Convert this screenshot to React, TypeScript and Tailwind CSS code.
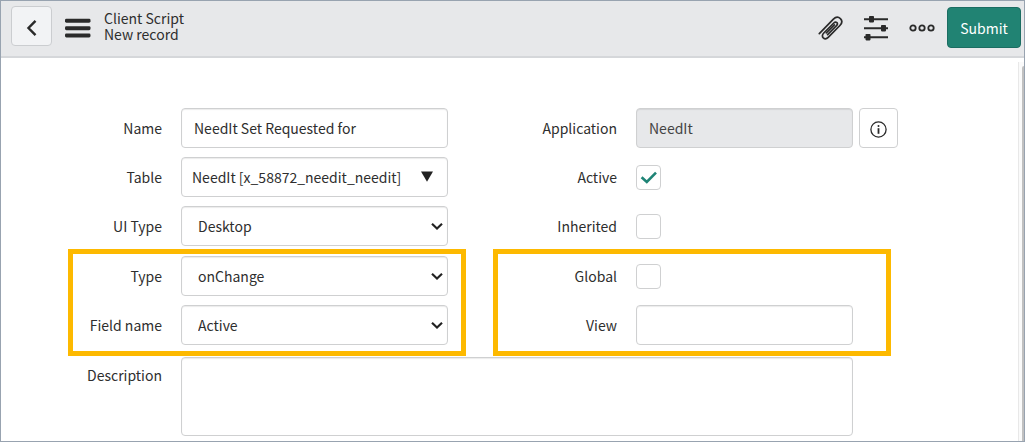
import type { ReactNode } from "react";

const fieldBox =
  "h-10 w-full min-w-0 rounded-[4px] border border-[#cfd0d1] bg-white text-[14px] leading-5 text-[#2e2e2e] shadow-[inset_0_1px_1px_rgba(0,0,0,0.08)]";

function Row({ id, label, wide, children }: { id: string; label: string; wide?: boolean; children: ReactNode }) {
  return (
    <div
      className={
        wide
          ? "grid grid-cols-[169px_minmax(0,1fr)] items-center gap-x-[19px]"
          : "grid grid-cols-[161px_minmax(0,1fr)] items-center gap-x-[19px]"
      }
    >
      <label htmlFor={id} className="text-right">
        {label}
      </label>
      {children}
    </div>
  );
}

function SelectBox({ id, options }: { id: string; options: string[] }) {
  return (
    <div className="relative">
      <select id={id} className={`${fieldBox} appearance-none pr-8 pl-4`}>
        {options.map((o) => (
          <option key={o}>{o}</option>
        ))}
      </select>
      <svg
        className="pointer-events-none absolute top-4 right-[5px] h-2 w-3"
        viewBox="0 0 12 8"
        fill="none"
        stroke="#222"
        strokeWidth="2.2"
        aria-hidden="true"
      >
        <path d="M1 1.800 6 6.500l5-4.700" />
      </svg>
    </div>
  );
}

function CheckBox({ id, checked }: { id: string; checked?: boolean }) {
  return (
    <div className="flex h-10 items-center">
      <span className="relative flex">
        <input
          id={id}
          type="checkbox"
          defaultChecked={checked}
          className="peer size-[25px] appearance-none rounded-[4px] border border-[#cfd0d1] bg-white"
        />
        <svg
          className="pointer-events-none absolute inset-0 hidden size-[25px] peer-checked:block"
          viewBox="0 0 25 25"
          fill="none"
          stroke="#1f8476"
          strokeWidth="2.6"
          aria-hidden="true"
        >
          <path d="M5.600 12.200 10.800 17 20 7.600" />
        </svg>
      </span>
    </div>
  );
}

function Highlight({ side }: { side: "left" | "right" }) {
  return (
    <div
      aria-hidden="true"
      className={
        side === "left"
          ? "pointer-events-none absolute -top-[7px] -right-[18px] -bottom-[11px] left-[67px] border-[5px] border-[#fdb900]"
          : "pointer-events-none absolute -top-[7px] right-[7px] -bottom-[11px] left-[45px] border-[5px] border-[#fdb900]"
      }
    />
  );
}

export default function App() {
  return (
    <div className="flex min-h-screen flex-col border border-[#98a3b0] bg-white font-['Noto_Sans_CJK_SC','Noto_Sans',sans-serif] text-[14px] leading-5 text-[#2e2e2e]">
      <header className="flex items-start justify-between border-b-2 border-[#d5d7da] bg-[#e7e8ea] pt-[5px] pr-[3px] pb-[8px] pl-[10px]">
        <div className="flex h-10 items-center">
          <button
            type="button"
            aria-label="Back"
            className="flex h-10 w-[41px] items-center justify-center rounded-[4px] border border-[#cbcdd0] bg-[#f2f3f5]"
          >
            <svg className="mt-[3px] h-4 w-3" viewBox="0 0 12 16" fill="none" stroke="#2a2a2a" strokeWidth="2.4" aria-hidden="true">
              <path d="M9.500 .9 2.500 8l7 7.100" />
            </svg>
          </button>
          <button type="button" aria-label="Menu" className="mt-[3px] ml-[13px]">
            <svg className="h-5 w-[26px]" viewBox="0 0 26 20" fill="#2a2a2a" aria-hidden="true">
              <rect x="0" y="0.7" width="25.5" height="4" rx="1.4" />
              <rect x="0" y="8.2" width="25.5" height="4" rx="1.4" />
              <rect x="0" y="15.5" width="25.5" height="4" rx="1.4" />
            </svg>
          </button>
          <h1 className="ml-[13px] leading-4">
            <span className="block">Client Script</span>
            <span className="block">New record</span>
          </h1>
        </div>
        <div className="flex items-center pt-px">
          <button type="button" aria-label="Attachments">
            <svg
              className="h-6 w-[26px]"
              viewBox="0 0 26 24"
              fill="none"
              stroke="#2a2a2a"
              strokeWidth="1.7"
              strokeLinecap="round"
              aria-hidden="true"
            >
              <path d="M1.3 17.6 15.4 3.2c2.4-2.4 5-2.4 7-.6 2 2 1.800 4.500-.5 6.900L10.200 21.400c-1.700 1.700-3.600 1.700-4.900.5-1.300-1.300-1.200-3.200.5-4.900L15.800 7c1.100-1.100 2.300-1.100 3.100-.4.800.8.700 2-.4 3.100l-8.900 8.900" />
              <path d="m8.300 16.800 8-8" />
            </svg>
          </button>
          <button type="button" aria-label="Personalize form" className="ml-5">
            <svg className="h-[26px] w-6" viewBox="0 0 24 26" fill="#2a2a2a" aria-hidden="true">
              <path d="M0 3.200h24v2H0zM0 12.200h24v2H0zM0 21.200h24v2H0z" />
              <rect x="5" y="1" width="5" height="6.400" rx=".8" />
              <rect x="17" y="10" width="5" height="6.400" rx=".8" />
              <rect x="1.500" y="19" width="5" height="6.400" rx=".8" />
            </svg>
          </button>
          <button type="button" aria-label="More options" className="ml-[21px]">
            <svg className="h-2 w-[26px]" viewBox="0 0 26 8" fill="none" stroke="#2a2a2a" strokeWidth="1.800" aria-hidden="true">
              <circle cx="4" cy="4" r="2.700" />
              <circle cx="13" cy="4" r="2.700" />
              <circle cx="22" cy="4" r="2.700" />
            </svg>
          </button>
          <button
            type="submit"
            form="client-script"
            className="ml-3 h-[41px] w-[74px] rounded-[4px] border border-[#1b6d62] bg-[#218373] text-white"
          >
            Submit
          </button>
        </div>
      </header>

      <div className="flex grow">
        <form
          id="client-script"
          onSubmit={(e) => e.preventDefault()}
          className="grid grow grid-cols-[447fr_450fr] content-start pt-[50px] pr-[120px] pb-[5px]"
        >
          <div className="flex flex-col gap-[10px]">
            <div className="flex flex-col gap-[9px]">
              <Row id="name" label="Name">
                <input id="name" type="text" defaultValue="NeedIt Set Requested for" className={`${fieldBox} px-3`} />
              </Row>
              <Row id="table" label="Table">
                <div className="relative">
                  <select id="table" className={`${fieldBox} appearance-none pr-8 pl-[10px]`}>
                    <option>NeedIt [x_58872_needit_needit]</option>
                  </select>
                  <svg
                    className="pointer-events-none absolute top-[14px] right-[15px] h-[11px] w-3"
                    viewBox="0 0 12 11"
                    fill="#222"
                    aria-hidden="true"
                  >
                    <path d="M0 .5h12L6 10.800z" />
                  </svg>
                </div>
              </Row>
              <Row id="ui-type" label="UI Type">
                <SelectBox id="ui-type" options={["Desktop", "Mobile / Service Portal", "All"]} />
              </Row>
            </div>
            <div className="relative flex flex-col gap-[9px]">
              <Row id="type" label="Type">
                <SelectBox id="type" options={["onChange", "onLoad", "onSubmit", "onCellEdit"]} />
              </Row>
              <Row id="field-name" label="Field name">
                <SelectBox id="field-name" options={["Active"]} />
              </Row>
              <Highlight side="left" />
            </div>
          </div>

          <div className="flex flex-col gap-[10px]">
            <div className="flex flex-col gap-[9px]">
              <Row id="application" label="Application" wide>
                <div className="flex gap-[6px]">
                  <input
                    id="application"
                    type="text"
                    readOnly
                    defaultValue="NeedIt"
                    className="h-10 w-full min-w-0 rounded-[4px] border border-[#cfd0d1] bg-[#e7e8ea] px-3 text-[#444] shadow-[inset_0_1px_1px_rgba(0,0,0,0.08)]"
                  />
                  <button
                    type="button"
                    aria-label="Application details"
                    className="flex h-10 w-[39px] shrink-0 items-center justify-center rounded-[4px] border border-[#cfd0d1] bg-white pt-[3px]"
                  >
                    <svg className="size-[17px]" viewBox="0 0 17 17" fill="none" stroke="#2a2a2a" strokeWidth="1.300" aria-hidden="true">
                      <circle cx="8.500" cy="8.500" r="7.600" />
                      <path d="M8.500 7.200v5.600" strokeWidth="1.800" />
                      <circle cx="8.500" cy="4.900" r="1" fill="#2a2a2a" stroke="none" />
                    </svg>
                  </button>
                </div>
              </Row>
              <Row id="active" label="Active" wide>
                <CheckBox id="active" checked />
              </Row>
              <Row id="inherited" label="Inherited" wide>
                <CheckBox id="inherited" />
              </Row>
            </div>
            <div className="relative flex flex-col gap-[9px]">
              <Row id="global" label="Global" wide>
                <CheckBox id="global" />
              </Row>
              <Row id="view" label="View" wide>
                <div className="pr-[45px]">
                  <input id="view" type="text" className={`${fieldBox} px-3`} />
                </div>
              </Row>
              <Highlight side="right" />
            </div>
          </div>

          <div className="col-span-2 mt-3 grid grid-cols-[161px_minmax(0,1fr)] gap-x-[19px] pr-[45px]">
            <label htmlFor="description" className="pt-2 text-right">
              Description
            </label>
            <textarea
              id="description"
              className="block h-[79px] w-full resize-none rounded-[4px] border border-[#cfd0d1] bg-white px-3 py-2 shadow-[inset_0_1px_1px_rgba(0,0,0,0.08)]"
            />
          </div>
        </form>
        <div aria-hidden="true" className="mt-1 flex w-[6px] shrink-0 justify-end border-l border-[#e8e8e8] bg-[#fafafa] pt-1">
          <div className="w-[2px] rounded-tl bg-[#c1c1c1]" />
        </div>
      </div>
    </div>
  );
}
